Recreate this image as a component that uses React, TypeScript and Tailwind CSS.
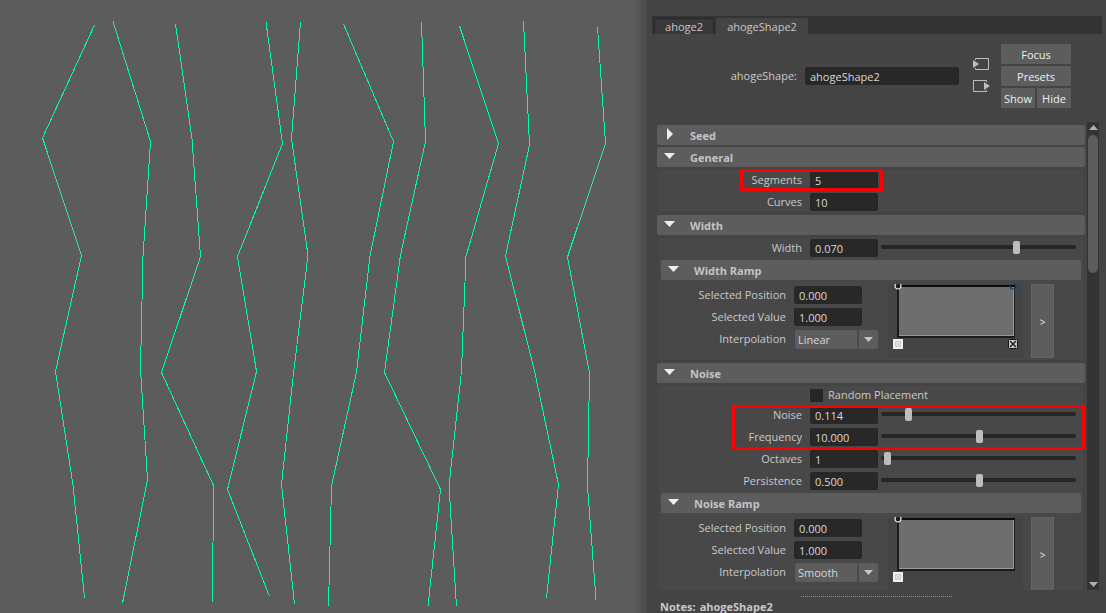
import type { ReactNode } from 'react'

const curves = [
  '94.5,25 42.5,138 81.5,255.5 55.5,371.5 73,485 84.5,598',
  '113,21.5 150.5,141.5 143,256.5 140.5,369 147.5,480 122.5,603',
  '175.5,24 192,139 200.5,256.5 161.5,372.5 213.5,485.5 212.5,602',
  '266,22 282.5,143.5 237.5,256.5 256.5,371.5 227.5,489.5 269.5,596.5',
  '300.5,22 291.5,138.5 308,255.5 293.5,373 281.5,484.5 294.5,604',
  '343.5,24 393.5,141.5 370,256 356.5,372 331.5,486 328.5,606',
  '421.5,22 425.5,141.5 400.5,255 384.5,372.5 440.5,489.5 428,606',
  '459.5,26 498.5,143.5 466,256.5 461.5,371 449,486 456.5,606.5',
  '523.5,21 529.5,145 505.5,256 534.5,371 558.5,484.5 546.5,598',
  '597.5,27 605.5,143.5 567.5,257 589.5,373 587.5,486 596,599.5',
]

const fieldClass = 'h-[18px] rounded-[2px] bg-[#282828] px-[5px] pt-px text-[#d8d8d8] outline-none'
const buttonClass = 'h-5 rounded-[1px] bg-[#5d5d5d] pt-[2px] text-center text-[#eeeeee]'

function Viewport() {
  return (
    <main className="flex min-w-0 flex-1 overflow-hidden bg-[#5c5c5c]">
      <svg width="633" height="613" viewBox="0 0 633 613" fill="none" stroke="#00ff9f" shapeRendering="crispEdges" className="shrink-0">
        {curves.map(points => (
          <polyline key={points} points={points} />
        ))}
      </svg>
      <div className="ml-auto w-3 bg-linear-to-r from-[#5c5c5c] to-[#4c4c4c]" />
    </main>
  )
}

function SectionHeader({ title, open = true }: { title: string; open?: boolean }) {
  return (
    <button
      type="button"
      aria-expanded={open}
      className="flex h-5 w-full items-center rounded-[2px] bg-[#5d5d5d] pl-[7px] text-left font-bold text-[#c4c4c4]"
    >
      <svg width="12" height="12" viewBox="0 0 12 12" fill="#eeeeee" className="mb-[3px] mr-[14px]">
        {open ? <path d="M0 3h11L5.500 9z" /> : <path d="M3 0v12L9 6z" />}
      </svg>
      <span className="pt-[2px]">{title}</span>
    </button>
  )
}

function SectionBody({ children }: { children: ReactNode }) {
  return <div className="mx-[2px] my-[3px] bg-[#484848] py-px">{children}</div>
}

type FieldProps = {
  id: string
  label: string
  value: string
  slider?: { min: number; max: number }
}

function Field({ id, label, value, slider }: FieldProps) {
  return (
    <div className="flex items-center">
      <label htmlFor={id} className="mr-2 w-[143px] text-right">{label}</label>
      <input id={id} defaultValue={value} className={`${fieldClass} w-[68px]`} />
      {slider && (
        <div className="mb-[2px] ml-[3px] mr-[7px] grid flex-1 items-center">
          <span className="col-start-1 row-start-1 h-1 rounded-full bg-[#262626]" />
          <input
            type="range"
            aria-label={`${label} slider`}
            min={slider.min}
            max={slider.max}
            step="any"
            defaultValue={value}
            className="col-start-1 row-start-1 ml-[3px] mr-px h-[13px] appearance-none bg-transparent [&::-webkit-slider-thumb]:h-[13px] [&::-webkit-slider-thumb]:w-[7px] [&::-webkit-slider-thumb]:appearance-none [&::-webkit-slider-thumb]:rounded-[2px] [&::-webkit-slider-thumb]:bg-[#bdbdbd]"
          />
        </div>
      )}
    </div>
  )
}

function RampGraph({ endHandle }: { endHandle: boolean }) {
  return (
    <svg width="135" height="74" viewBox="0 0 135 74" fill="none" className="ml-[10px] bg-[#444444]">
      <path d="M9 1h118v53H9z" fill="#1c1c1c" />
      <path d="M9 1h118v2H9z" fill="#0c0c0c" />
      <path d="M11 3h115v49H11z" fill="#999999" />
      <path d="M11 3h114v48H11z" fill="#6e6e6e" />
      <circle cx="10" cy="2" r="3" fill="#1c1c1c" stroke="#eeeeee" strokeWidth="1.200" />
      <path d="M5 55h10v10H5z" fill="#f0f0f0" />
      <path d="M7.500 57.500h5v5h-5zM8 58l4 4M12 58l-4 4" stroke="#cccccc" />
      {endHandle && (
        <>
          <circle cx="125" cy="2" r="3" stroke="#123f66" strokeWidth="1.200" />
          <rect x="120.500" y="55.500" width="9" height="9" rx="1" fill="#c8c8c8" stroke="#151515" />
          <path d="M122 57l6 6M128 57l-6 6" stroke="#151515" strokeWidth="1.300" />
        </>
      )}
    </svg>
  )
}

function Ramp({ name, interpolation, endHandle = false }: { name: string; interpolation: string; endHandle?: boolean }) {
  const id = name.toLowerCase()
  return (
    <div className="mx-[2px] mt-[3px]">
      <SectionHeader title={`${name} Ramp`} />
      <div className="mt-1 flex pb-px">
        <div className="mt-[2px] grid grid-cols-[125px_84px] content-start items-center gap-x-2 gap-y-1">
          <label htmlFor={`${id}-position`} className="text-right">Selected Position</label>
          <input id={`${id}-position`} defaultValue="0.000" className={`${fieldClass} w-[68px]`} />
          <label htmlFor={`${id}-value`} className="text-right">Selected Value</label>
          <input id={`${id}-value`} defaultValue="1.000" className={`${fieldClass} w-[68px]`} />
          <label htmlFor={`${id}-interpolation`} className="pb-[2px] text-right">Interpolation</label>
          <div className="grid pl-px">
            <select
              id={`${id}-interpolation`}
              defaultValue={interpolation}
              className="col-start-1 row-start-1 h-[19px] appearance-none rounded-[2px] bg-[#5d5d5d] pl-[3px] pt-px text-[#d8d8d8]"
            >
              <option>None</option>
              <option>Linear</option>
              <option>Smooth</option>
              <option>Spline</option>
            </select>
            <span className="pointer-events-none col-start-1 row-start-1 flex w-[21px] items-center justify-center justify-self-end border-l-2 border-[#4b4b4b]">
              <svg width="9" height="5" viewBox="0 0 9 5" fill="#c4c4c4"><path d="M0 0h9L4.500 5z" /></svg>
            </span>
          </div>
        </div>
        <RampGraph endHandle={endHandle} />
        <button type="button" aria-label={`Edit ${name} ramp`} className="ml-2 h-[74px] w-[23px] border border-[#646464] bg-[#5d5d5d] pt-[2px] text-[10px] text-[#eeeeee]">
          &gt;
        </button>
      </div>
    </div>
  )
}

function NodeHeader() {
  return (
    <header className="flex shrink-0 pb-[14px] pl-2 pr-[35px] pt-[10px]">
      <label htmlFor="node-name" className="mt-6 w-[137px] text-right">ahogeShape:</label>
      <input id="node-name" defaultValue="ahogeShape2" className={`${fieldClass} ml-2 mt-[23px] min-w-0 flex-1`} />
      <div className="ml-[14px] mt-[13px] flex flex-col gap-2">
        <button type="button" aria-label="Input connection">
          <svg width="17" height="14" viewBox="0 0 17 14" className="block">
            <path d="M2.500 3V1.500h13v11h-13V11" fill="none" stroke="#bdbdbd" />
            <path d="M0 3l6 4-6 4z" fill="#bdbdbd" />
          </svg>
        </button>
        <button type="button" aria-label="Output connection">
          <svg width="17" height="14" viewBox="0 0 17 14" className="block">
            <path d="M13.500 3V1.500H.5v11h13V11" fill="none" stroke="#bdbdbd" />
            <path d="M11 3l6 4-6 4z" fill="#bdbdbd" />
          </svg>
        </button>
      </div>
      <div className="ml-[11px] grid w-[70px] grid-cols-2 gap-[2px]">
        <button type="button" className={`${buttonClass} col-span-2`}>Focus</button>
        <button type="button" className={`${buttonClass} col-span-2`}>Presets</button>
        <button type="button" className={buttonClass}>Show</button>
        <button type="button" className={buttonClass}>Hide</button>
      </div>
    </header>
  )
}

function Scrollbar() {
  return (
    <div className="flex w-3 shrink-0 flex-col items-center bg-[#333333] py-[3px]">
      <svg width="9" height="5" viewBox="0 0 9 5" fill="#b0b0b0"><path d="M0 5h9L4.500 0z" /></svg>
      <div className="mt-[5px] h-[138px] w-[10px] rounded-full bg-[#5d5d5d]" />
      <svg width="9" height="5" viewBox="0 0 9 5" fill="#b0b0b0" className="mt-auto"><path d="M0 0h9L4.500 5z" /></svg>
    </div>
  )
}

function AttributeEditor() {
  return (
    <aside className="flex w-[461px] shrink-0 flex-col border-l border-[#505050] bg-[#444444] pl-[6px] text-[#c8c8c8]">
      <nav className="mr-1 mt-4 flex h-[18px] shrink-0 gap-[2px] bg-[#333333] pl-[2px] pt-[2px]">
        <button type="button" className="w-[60px] rounded-t-[2px] border border-b-0 border-[#262626] bg-[#393939]">ahoge2</button>
        <button type="button" className="w-[92px] rounded-t-[2px] bg-[#444444] pt-px">ahogeShape2</button>
      </nav>
      <NodeHeader />
      <div className="flex min-h-0 flex-1 pl-[5px] pr-[7px]">
        <div className="mr-[2px] min-w-0 flex-1 overflow-hidden pt-[3px]">
          <SectionHeader title="Seed" open={false} />
          <div className="mt-[2px]">
            <SectionHeader title="General" />
          </div>
          <SectionBody>
            <div className="relative flex flex-col gap-1">
              <Field id="segments" label="Segments" value="5" />
              <Field id="curves" label="Curves" value="10" />
              <div className="pointer-events-none absolute -top-[2px] left-[81px] h-[22px] w-[143px] border-3 border-[#ff0000]" />
            </div>
          </SectionBody>
          <SectionHeader title="Width" />
          <SectionBody>
            <Field id="width" label="Width" value="0.070" slider={{ min: 0, max: 0.1 }} />
            <Ramp name="Width" interpolation="Linear" endHandle />
          </SectionBody>
          <SectionHeader title="Noise" />
          <SectionBody>
            <label className="mb-[3px] flex h-4 items-center pl-[151px]">
              <input type="checkbox" className="mr-[5px] h-[13px] w-[13px] appearance-none rounded-[1px] bg-[#262626] checked:bg-[#c0c0c0]" />
              Random Placement
            </label>
            <div className="relative flex flex-col gap-1">
              <Field id="noise" label="Noise" value="0.114" slider={{ min: 0, max: 1 }} />
              <Field id="frequency" label="Frequency" value="10.000" slider={{ min: 0, max: 20 }} />
              <Field id="octaves" label="Octaves" value="1" slider={{ min: 1, max: 8 }} />
              <Field id="persistence" label="Persistence" value="0.500" slider={{ min: 0, max: 1 }} />
              <div className="pointer-events-none absolute -right-[2px] -top-px left-[73px] h-[45px] border-3 border-[#ff0000]" />
            </div>
            <Ramp name="Noise" interpolation="Smooth" />
          </SectionBody>
        </div>
        <Scrollbar />
      </div>
      <footer className="h-[23px] shrink-0 pl-2 font-bold">
        <div className="ml-[141px] mt-[6px] w-[151px] border-t border-dotted border-[#909090]" />
        <p className="mt-[2px] flex gap-1"><span>Notes:</span><span>ahogeShape2</span></p>
      </footer>
    </aside>
  )
}

export default function App() {
  return (
    <div className="flex h-screen overflow-hidden bg-[#444444] font-['Open_Sans',sans-serif] text-[11px] leading-4">
      <Viewport />
      <AttributeEditor />
    </div>
  )
}
